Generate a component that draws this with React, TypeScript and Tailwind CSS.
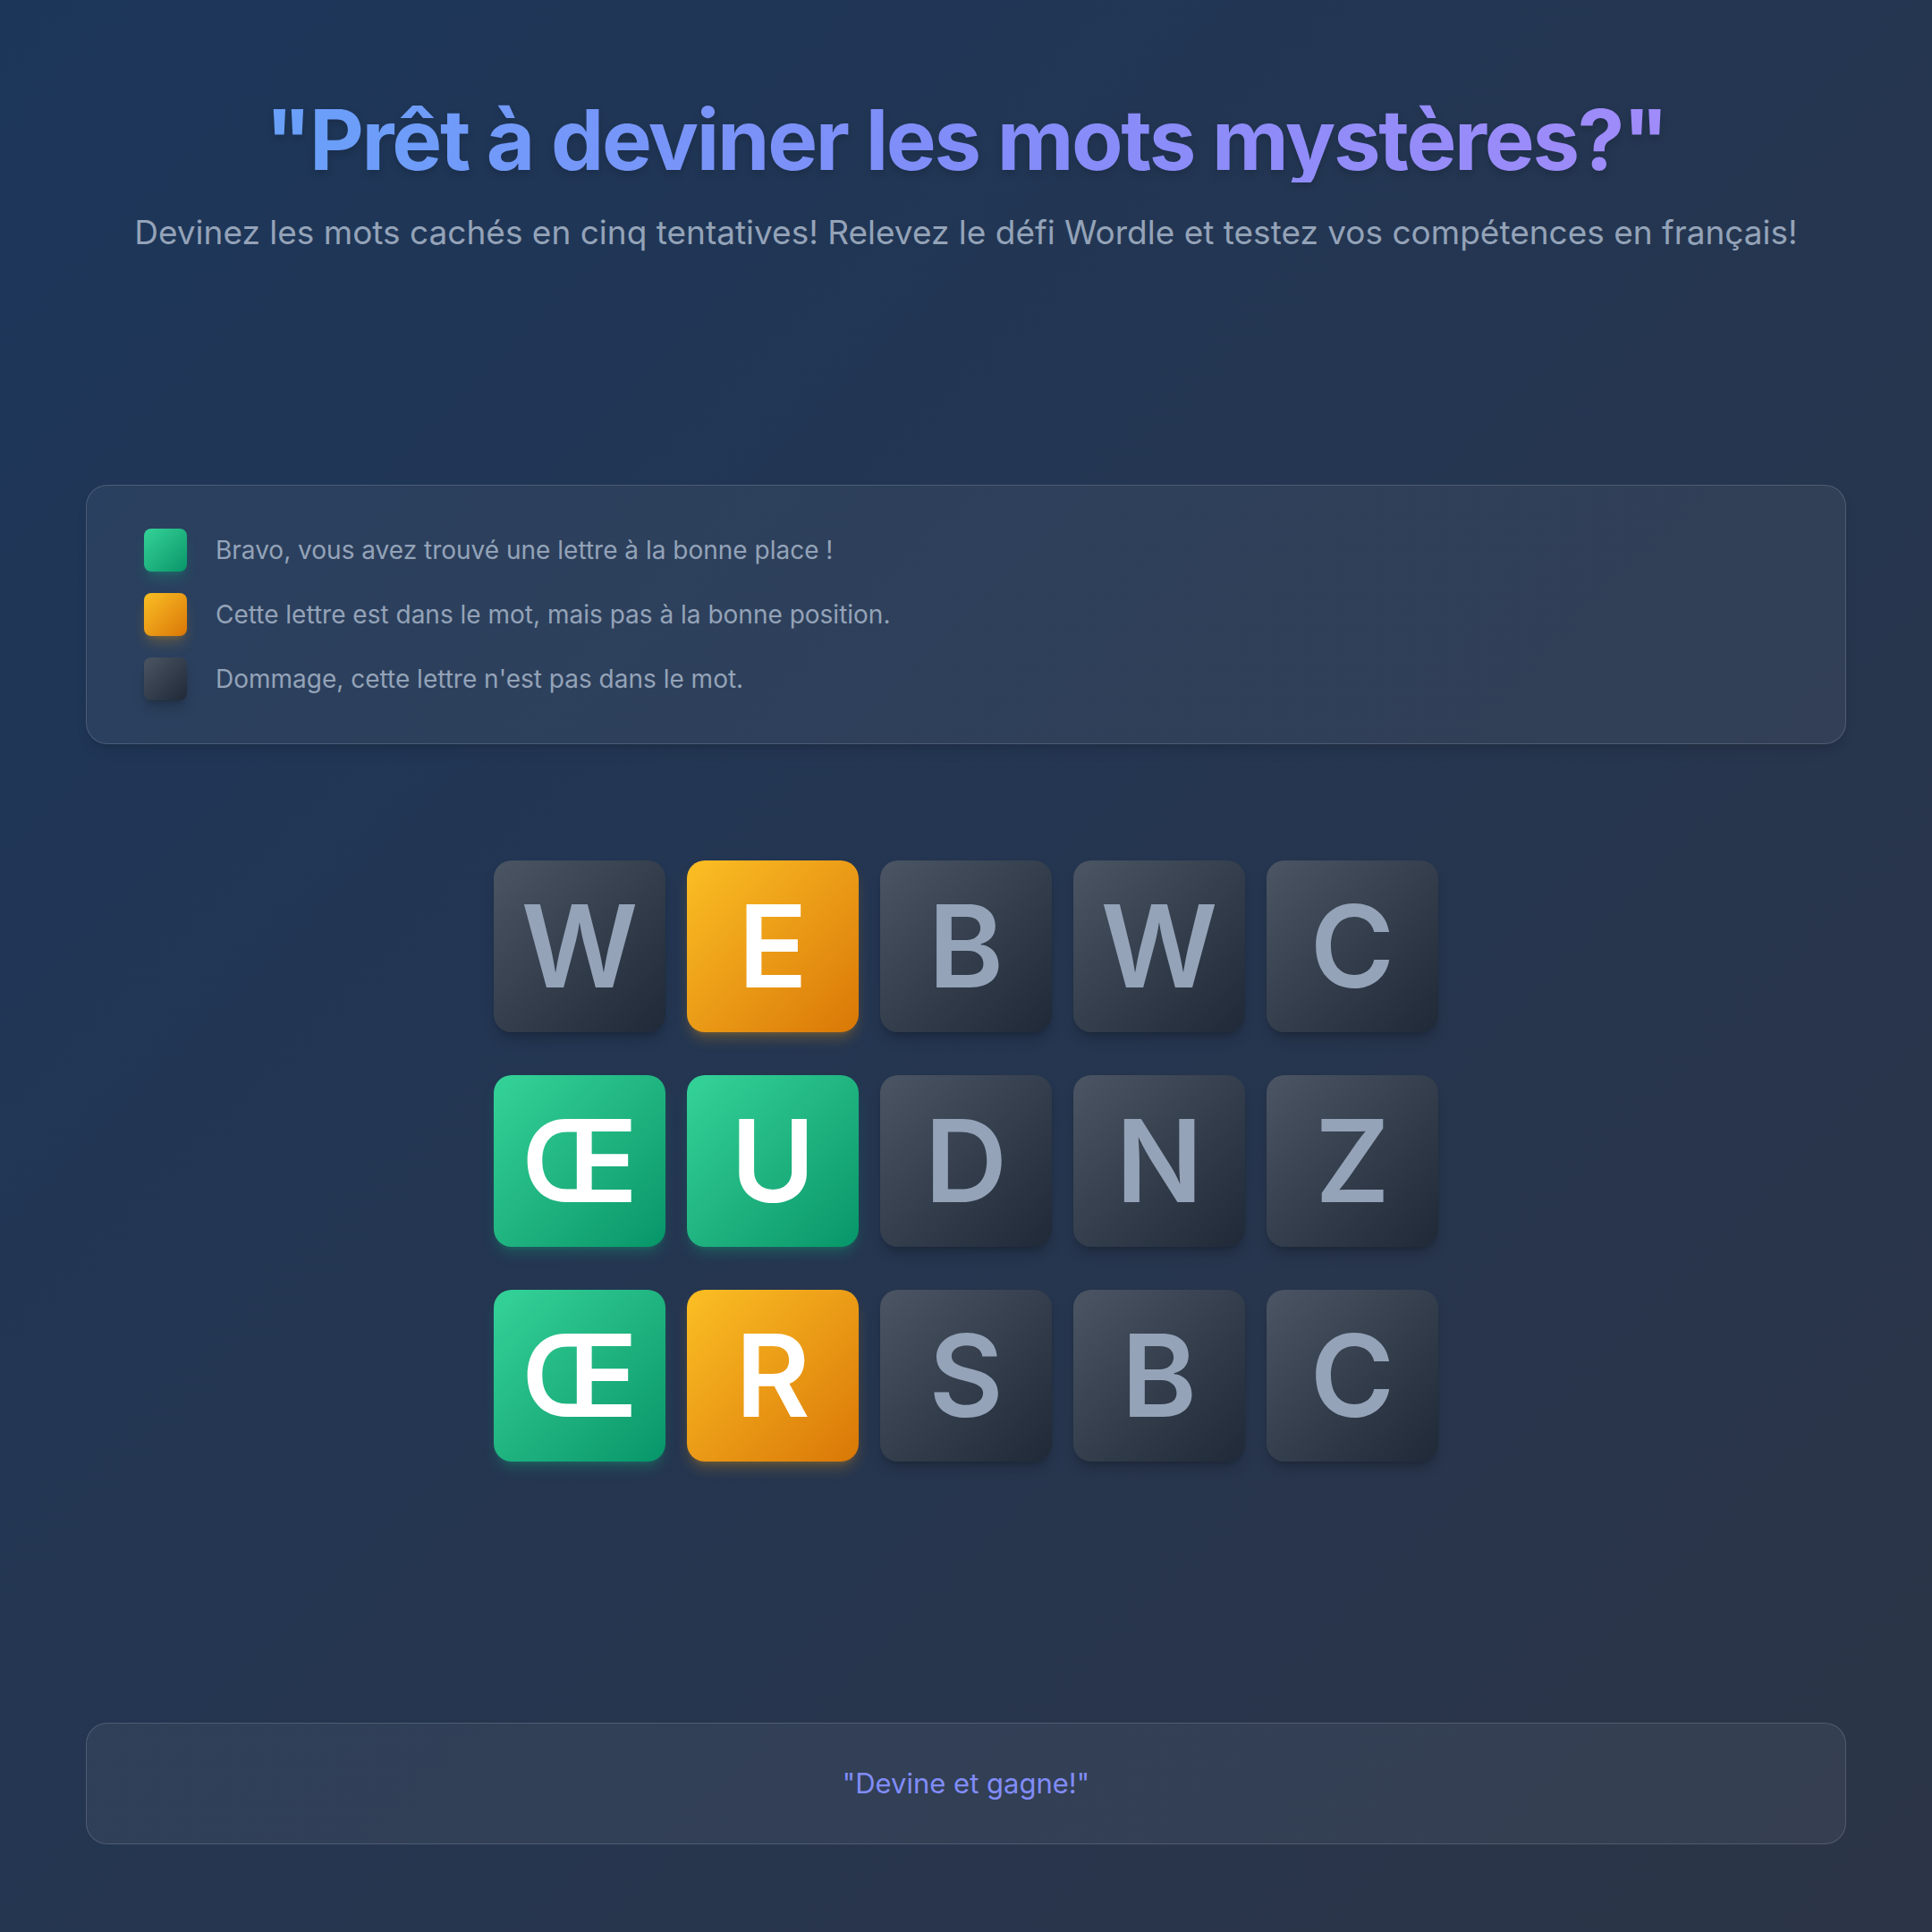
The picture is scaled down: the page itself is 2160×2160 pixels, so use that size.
import React from "react";

type Status = "correct" | "present" | "absent";

const BOARD: { letter: string; status: Status }[][] = [
  [
    { letter: "W", status: "absent" },
    { letter: "E", status: "present" },
    { letter: "B", status: "absent" },
    { letter: "W", status: "absent" },
    { letter: "C", status: "absent" },
  ],
  [
    { letter: "Œ", status: "correct" },
    { letter: "U", status: "correct" },
    { letter: "D", status: "absent" },
    { letter: "N", status: "absent" },
    { letter: "Z", status: "absent" },
  ],
  [
    { letter: "Œ", status: "correct" },
    { letter: "R", status: "present" },
    { letter: "S", status: "absent" },
    { letter: "B", status: "absent" },
    { letter: "C", status: "absent" },
  ],
];

const SWATCH: Record<Status, string> = {
  correct: "bg-gradient-to-br from-[#34d399] to-[#059669] shadow-lg shadow-[#10b981]/25",
  present: "bg-gradient-to-br from-[#fbbf24] to-[#d97706] shadow-lg shadow-[#f59e0b]/25",
  absent: "bg-gradient-to-br from-[#4b5563] to-[#1f2937] shadow-lg shadow-black/20",
};

const LETTER: Record<Status, string> = {
  correct: "text-white",
  present: "text-white",
  absent: "text-[#94a3b8]",
};

const LEGEND: { status: Status; text: string }[] = [
  { status: "correct", text: "Bravo, vous avez trouvé une lettre à la bonne place !" },
  { status: "present", text: "Cette lettre est dans le mot, mais pas à la bonne position." },
  { status: "absent", text: "Dommage, cette lettre n'est pas dans le mot." },
];

function Tile({ letter, status }: { letter: string; status: Status }) {
  return (
    <div
      className={`flex h-48 w-48 items-center justify-center rounded-[20px] text-9xl font-semibold leading-none ${SWATCH[status]} ${LETTER[status]}`}
    >
      {letter}
    </div>
  );
}

export default function App() {
  return (
    <div
      className="min-h-screen bg-gradient-to-br from-[#1c365a] to-[#2c3547] px-24 py-24"
      style={{ fontFamily: "Inter, 'Noto Sans', sans-serif" }}
    >
      <header className="pt-3 text-center">
        <h1 className="bg-gradient-to-r from-[#60a5fa] via-[#818cf8] to-[#a78bfa] bg-clip-text text-[94px] font-bold leading-[96px] tracking-tight text-transparent drop-shadow-lg">
          "Prêt à deviner les mots mystères?"
        </h1>
        <p className="mt-9 text-[37px] leading-10 text-[#94a3b8]">
          Devinez les mots cachés en cinq tentatives! Relevez le défi Wordle et testez vos
          compétences en français!
        </p>
      </header>

      <section className="mt-[262px] rounded-3xl border border-white/15 bg-white/5 px-16 py-12 shadow-lg">
        <ul className="space-y-6">
          {LEGEND.map((item) => (
            <li key={item.status} className="flex items-center gap-8">
              <span className={`h-12 w-12 shrink-0 rounded-lg ${SWATCH[item.status]}`} />
              <span className="text-[28px] text-[#94a3b8]">{item.text}</span>
            </li>
          ))}
        </ul>
      </section>

      <main className="mt-[130px] flex flex-col items-center gap-12">
        {BOARD.map((row, r) => (
          <div key={r} className="flex gap-6">
            {row.map((cell, c) => (
              <Tile key={c} letter={cell.letter} status={cell.status} />
            ))}
          </div>
        ))}
      </main>

      <footer className="mt-[292px] rounded-3xl border border-white/15 bg-white/5 py-[49px] text-center">
        <p className="text-[31px] leading-9 text-[#818cf8]">"Devine et gagne!"</p>
      </footer>
    </div>
  );
}
